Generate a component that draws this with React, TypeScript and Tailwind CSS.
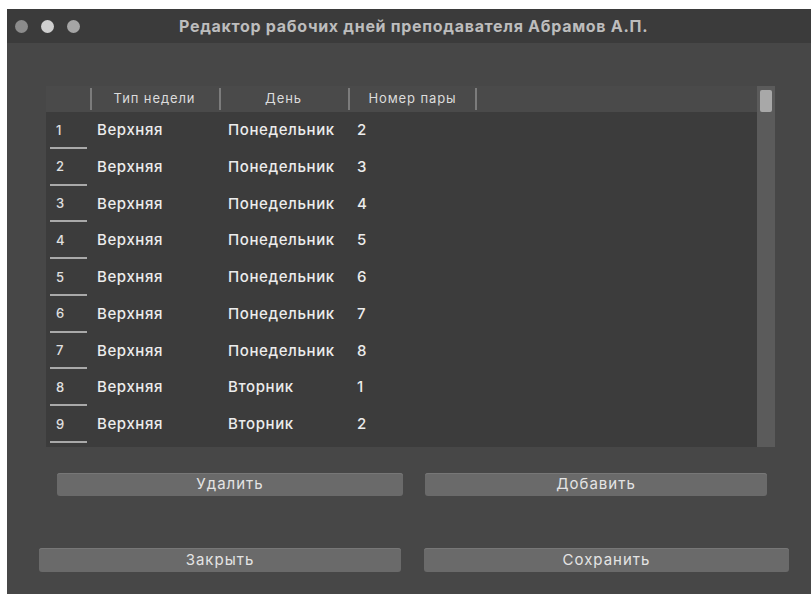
import React from "react";

// Teacher workday editor: a dark macOS-style dialog with a small table
// (week type / day / pair number) and four action buttons.

interface Workday {
  week: string;
  day: string;
  pair: number;
}

const ROWS: Workday[] = [
  { week: "Верхняя", day: "Понедельник", pair: 2 },
  { week: "Верхняя", day: "Понедельник", pair: 3 },
  { week: "Верхняя", day: "Понедельник", pair: 4 },
  { week: "Верхняя", day: "Понедельник", pair: 5 },
  { week: "Верхняя", day: "Понедельник", pair: 6 },
  { week: "Верхняя", day: "Понедельник", pair: 7 },
  { week: "Верхняя", day: "Понедельник", pair: 8 },
  { week: "Верхняя", day: "Вторник", pair: 1 },
  { week: "Верхняя", day: "Вторник", pair: 2 },
];

function TitleBar() {
  return (
    <div className="flex h-[34px] shrink-0 items-center bg-[#3b3b3b] pl-[8px]">
      <div className="flex items-center gap-[13px]">
        <span className="h-[13px] w-[13px] rounded-full bg-[#8c8c8c]" />
        <span className="h-[13px] w-[13px] rounded-full bg-[#cfcfcf]" />
        <span className="h-[13px] w-[13px] rounded-full bg-[#a6a6a6]" />
      </div>
      <span className="ml-[99px] text-[16px] font-bold tracking-[0.7px] text-[#bdbdbd]">
        Редактор рабочих дней преподавателя Абрамов А.П.
      </span>
    </div>
  );
}

function HeaderCell({ label, last }: { label: string; last?: boolean }) {
  return (
    <div className="relative flex h-full w-[129px] items-center justify-center text-[13px] tracking-[0.9px] text-[#dcdcdc]">
      <span className="absolute left-0 top-[2px] h-[22px] w-[2px] bg-[#7c7c7c]" />
      {label}
      {last && <span className="absolute right-0 top-[2px] h-[22px] w-[2px] bg-[#7c7c7c]" />}
    </div>
  );
}

function Button({ label, className }: { label: string; className: string }) {
  return (
    <button
      className={`flex items-center justify-center rounded-[3px] bg-[#6a6a6a] text-[15px] tracking-[1px] text-[#e4e4e4] shadow-[inset_0_1px_0_#777] ${className}`}
    >
      {label}
    </button>
  );
}

export default function App() {
  return (
    <div className="h-[594px] w-[811px] overflow-hidden bg-white pl-[7px] pt-[9px] font-['Inter','Liberation_Sans',sans-serif]">
      <div className="flex h-full w-[810px] flex-col bg-[#474747] text-[#ececec]">
        <TitleBar />

        {/* table with vertical header and scrollbar */}
        <div className="ml-[39px] mt-[43px] flex w-[729px]">
          <div className="flex w-[711px] flex-col">
            <div className="flex h-[26px] items-center bg-[#4a4a4a]">
              <div className="w-[44px]" />
              <HeaderCell label="Тип недели" />
              <HeaderCell label="День" />
              <HeaderCell label="Номер пары" last />
            </div>
            <div className="h-[335px] overflow-hidden bg-[#3c3c3c]">
              {ROWS.map((r, i) => (
                <div
                  key={i}
                  className="flex h-[36.75px] items-center text-[15px] font-medium tracking-[0.6px]"
                >
                  <div className="relative flex h-full w-[44px] items-center pl-[10px] text-[13px] text-[#e0e0e0]">
                    {i + 1}
                    <span className="absolute bottom-0 left-[4px] h-[2px] w-[37px] bg-[#a9a9a9]" />
                  </div>
                  <div className="w-[129px] pl-[7px]">{r.week}</div>
                  <div className="w-[129px] pl-[9px]">{r.day}</div>
                  <div className="w-[129px] pl-[9px]">{r.pair}</div>
                </div>
              ))}
            </div>
          </div>
          <div className="flex w-[18px] flex-col bg-[#5b5b5b] pt-[4px]">
            <div className="mx-auto h-[22px] w-[12px] rounded-[2px] bg-[#a8a8a8]" />
          </div>
        </div>

        <div className="mt-[26px] flex gap-[22px] pl-[50px]">
          <Button label="Удалить" className="h-[23px] w-[346px]" />
          <Button label="Добавить" className="h-[23px] w-[342px]" />
        </div>

        <div className="mt-[52px] flex gap-[23px] pl-[32px]">
          <Button label="Закрыть" className="h-[24px] w-[362px]" />
          <Button label="Сохранить" className="h-[24px] w-[365px]" />
        </div>
      </div>
    </div>
  );
}
